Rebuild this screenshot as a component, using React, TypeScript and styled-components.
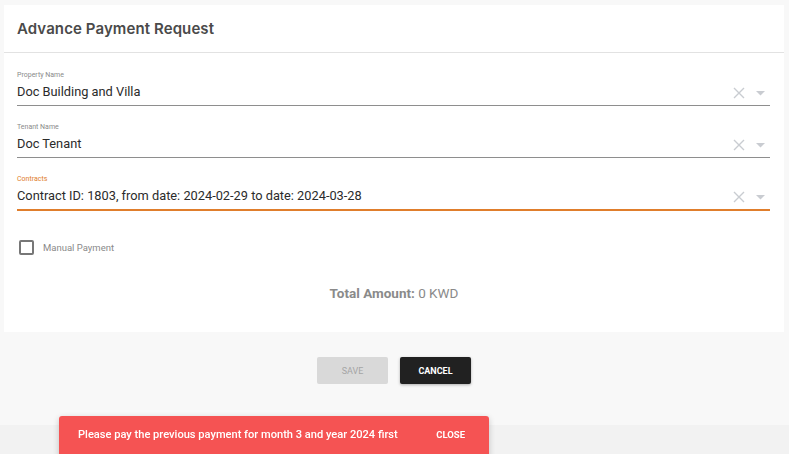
import React from 'react';
import styled, { createGlobalStyle } from 'styled-components';

const GlobalStyle = createGlobalStyle`
  html, body {
    margin: 0;
    padding: 0;
    background: #f8f8f8;
    font-family: Roboto, "Liberation Sans", sans-serif;
  }
`;

const fields = [
  { label: 'Property Name', value: 'Doc Building and Villa', active: false },
  { label: 'Tenant Name', value: 'Doc Tenant', active: false },
  {
    label: 'Contracts',
    value: 'Contract ID: 1803, from date: 2024-02-29 to date: 2024-03-28',
    active: true,
  },
];

export default function App() {
  return (
    <>
      <GlobalStyle />
      <Page>
        <Card>
          <Header>
            <Title>Advance Payment Request</Title>
          </Header>
          <Body>
            {fields.map((f) => (
              <Field key={f.label} $active={f.active}>
                <Label $active={f.active}>{f.label}</Label>
                <ValueRow>
                  <Value>{f.value}</Value>
                  <Icons>
                    <svg width="12" height="12" viewBox="0 0 12 12">
                      <path
                        d="M1 1L11 11M11 1L1 11"
                        stroke="#c9ccd1"
                        strokeWidth="1.4"
                        fill="none"
                      />
                    </svg>
                    <svg width="9" height="5" viewBox="0 0 9 5">
                      <path d="M0 0H9L4.5 4.5Z" fill="#c9ccd1" />
                    </svg>
                  </Icons>
                </ValueRow>
              </Field>
            ))}
            <CheckRow>
              <CheckBox />
              <CheckLabel>Manual Payment</CheckLabel>
            </CheckRow>
            <Total>
              <b>Total Amount:</b> 0 KWD
            </Total>
          </Body>
        </Card>
        <Actions>
          <Button $variant="disabled">SAVE</Button>
          <Button $variant="dark">CANCEL</Button>
        </Actions>
      </Page>
      <Footer />
      <Snackbar>
        <SnackText>Please pay the previous payment for month 3 and year 2024 first</SnackText>
        <SnackAction>CLOSE</SnackAction>
      </Snackbar>
    </>
  );
}

const Page = styled.div`
  padding: 5px 5px 0 4px;
  height: 425px;
  box-sizing: border-box;
`;

const Card = styled.div`
  background: #fff;
  height: 327px;
  display: flex;
  flex-direction: column;
`;

const Header = styled.div`
  height: 47px;
  border-bottom: 1px solid #e2e2e2;
  display: flex;
  align-items: center;
  padding: 0 13px;
`;

const Title = styled.div`
  font-family: Inter, "Open Sans", sans-serif;
  font-weight: 600;
  font-size: 15px;
  color: #4a4a4a;
  letter-spacing: 0.1px;
`;

const Body = styled.div`
  padding: 18px 13px 0 13px;
  display: flex;
  flex-direction: column;
`;

const Field = styled.div<{ $active: boolean }>`
  height: 34px;
  margin-bottom: 17px;
  width: 753px;
  border-bottom: ${(p) => (p.$active ? '2px solid #e07e2c' : '1px solid #8e8e8e')};
  display: flex;
  flex-direction: column;
`;

const Label = styled.div<{ $active: boolean }>`
  font-size: 7px;
  line-height: 9px;
  color: ${(p) => (p.$active ? '#e07e2c' : '#8a8a8a')};
`;

const ValueRow = styled.div`
  display: flex;
  align-items: center;
  justify-content: space-between;
  height: 22px;
`;

const Value = styled.div`
  font-size: 12.8px;
  color: #2b2b2b;
`;

const Icons = styled.div`
  display: flex;
  align-items: center;
  gap: 11px;
  padding-right: 5px;
  padding-top: 4px;
`;

const CheckRow = styled.div`
  display: flex;
  align-items: center;
  gap: 9px;
  margin: 12px 0 0 2px;
`;

const CheckBox = styled.div`
  width: 11px;
  height: 11px;
  border: 2px solid #777;
  border-radius: 2px;
`;

const CheckLabel = styled.div`
  font-size: 9.5px;
  color: #8a8a8a;
`;

const Total = styled.div`
  margin-top: 30px;
  text-align: center;
  font-size: 13.5px;
  color: #8a8a8a;
  b {
    font-weight: 700;
  }
`;

const Actions = styled.div`
  display: flex;
  justify-content: center;
  gap: 12px;
  margin-top: 25px;
`;

const Button = styled.div<{ $variant: 'dark' | 'disabled' }>`
  width: 71px;
  height: 27px;
  display: flex;
  align-items: center;
  justify-content: center;
  font-size: 9px;
  font-weight: ${(p) => (p.$variant === 'dark' ? 700 : 400)};
  border-radius: 2px;
  background: ${(p) => (p.$variant === 'dark' ? '#212121' : '#d9d9d9')};
  color: ${(p) => (p.$variant === 'dark' ? '#fff' : '#a5a5a5')};
  box-shadow: ${(p) => (p.$variant === 'dark' ? '0 1px 3px rgba(0,0,0,0.3)' : 'none')};
`;

const Footer = styled.div`
  height: 29px;
  background: #f2f2f2;
`;

const Snackbar = styled.div`
  position: fixed;
  left: 59px;
  top: 416px;
  width: 430px;
  height: 44px;
  background: #f55353;
  border-radius: 3px;
  box-shadow: 0 2px 6px rgba(0, 0, 0, 0.2);
  display: flex;
  align-items: flex-start;
  justify-content: space-between;
  padding: 12px 24px 0 19px;
  box-sizing: border-box;
  color: #fff;
`;

const SnackText = styled.div`
  font-size: 11.1px;
  font-weight: 500;
`;

const SnackAction = styled.div`
  font-size: 9.5px;
  font-weight: 700;
  padding-top: 1px;
`;
